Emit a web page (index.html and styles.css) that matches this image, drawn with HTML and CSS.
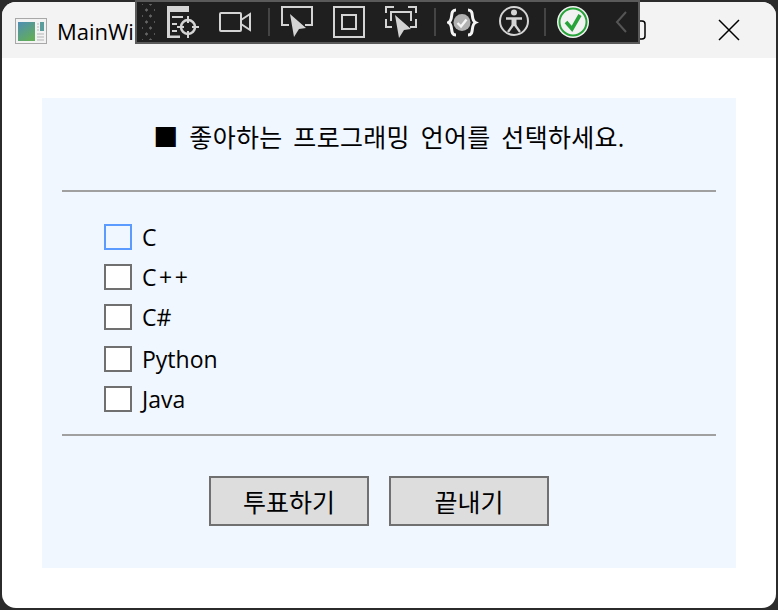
FILE: index.html
```html
<!DOCTYPE html>
<html lang="ko">
<head>
<meta charset="UTF-8" />
<title>MainWindow</title>
<link rel="stylesheet" href="styles.css">
</head>
<body>

<div class="window">
  <div class="titlebar">
    <svg class="app-icon" width="32" height="26" viewBox="0 0 32 26">
      <defs>
        <linearGradient id="pane" x1="0" y1="0" x2="0.6" y2="1">
          <stop offset="0" stop-color="#4f8db5" />
          <stop offset="1" stop-color="#62ad5c" />
        </linearGradient>
      </defs>
      <rect x="0.5" y="0.5" width="31" height="25" fill="#f2f2f2" stroke="#a8a8a8" />
      <rect x="3" y="4" width="17" height="19" fill="url(#pane)" />
      <rect x="25" y="4" width="4" height="9" fill="#5b9c9c" />
      <path d="M22 6h2M22 9h2M22 12h2M22 16h7M22 19h7M22 22h7" stroke="#b5b5b5" />
    </svg>
    <span class="title">MainWindow</span>
    <div class="win-btn">
      <svg width="22" height="22" viewBox="0 0 22 22"><rect x="1" y="2" width="20" height="18" rx="3" fill="none" stroke="#000" stroke-width="1.5" /></svg>
    </div>
    <div class="win-btn">
      <svg width="22" height="22" viewBox="0 0 22 22"><path d="M1 1L21 21M21 1L1 21" stroke="#000" stroke-width="1.5" /></svg>
    </div>
  </div>

  <div class="content">
    <div class="panel">
      <p class="question">■ 좋아하는 프로그래밍 언어를 선택하세요.</p>
      <hr class="rule">
      <div class="options">
        <label class="option"><input type="checkbox" class="check-hover"> C</label>
        <label class="option"><input type="checkbox"> <span class="wide">C++</span></label>
        <label class="option"><input type="checkbox"> C#</label>
        <label class="option option-python"><input type="checkbox"> Python</label>
        <label class="option"><input type="checkbox"> Java</label>
      </div>
      <hr class="rule">
      <div class="buttons">
        <button>투표하기</button>
        <button>끝내기</button>
      </div>
    </div>
  </div>
</div>

<!-- debug toolbar sits on top of the title bar -->
<div class="toolbar">
  <div class="grip"></div>
  <svg class="tb-icon" width="32" height="32" viewBox="0 0 32 32" fill="none" stroke="#d4d4d4" stroke-width="2">
    <path d="M0 0h22v6H0z" fill="#d4d4d4" stroke="none" />
    <path d="M1.500 6v25H13" stroke-width="3" />
    <path d="M5 11h11M5 18h5M5 25h5" />
    <circle cx="21" cy="21" r="7" fill="#1f1f1f" stroke-width="2.500" />
    <path d="M21 10v7M21 25v7M10 21h7M25 21h7" />
  </svg>
  <svg class="tb-icon" width="32" height="32" viewBox="0 0 32 32" fill="none" stroke="#d4d4d4" stroke-width="2">
    <rect x="1" y="7" width="21" height="18" rx="1" />
    <path d="M22 14l9-6v16l-9-6" />
  </svg>
  <div class="tb-sep"></div>
  <svg class="tb-icon" width="32" height="32" viewBox="0 0 32 32" fill="none" stroke="#d4d4d4" stroke-width="2">
    <path d="M8 19H1V1h30v18h-7" />
    <path d="M9 8l16 14-7 1-5 8z" fill="#d4d4d4" stroke="none" />
  </svg>
  <svg class="tb-icon" width="32" height="32" viewBox="0 0 32 32" fill="none" stroke="#d4d4d4" stroke-width="2">
    <rect x="1" y="1" width="30" height="30" />
    <rect x="9" y="9" width="14" height="14" />
  </svg>
  <svg class="tb-icon" width="32" height="32" viewBox="0 0 32 32" fill="none" stroke="#d4d4d4" stroke-width="2">
    <path d="M1 7V1h8M23 1h8v6M1 13v8h6M31 13v8h-6M6 15V6h20v9" />
    <path d="M10 9l16 14-7 1-5 8z" fill="#d4d4d4" stroke="none" />
  </svg>
  <div class="tb-sep"></div>
  <svg class="tb-icon" width="32" height="32" viewBox="0 0 32 32" fill="none">
    <path d="M9 4C2 4 7 14 1.500 16.500 7 19 2 29 9 29M21 4c7 0 2 10 7.500 12.500C23 19 28 29 21 29" stroke="#f4f4f4" stroke-width="3" />
    <circle cx="15" cy="16.500" r="8.500" fill="#b0b0b0" />
    <path d="M10.500 17l3.500 3.500 5.500-7" stroke="#f4f4f4" stroke-width="2.400" />
  </svg>
  <svg class="tb-icon" width="32" height="32" viewBox="0 0 32 32" fill="none" stroke="#d4d4d4">
    <circle cx="15" cy="15" r="14" stroke-width="2" />
    <circle cx="15" cy="6.500" r="3" fill="#d4d4d4" stroke="none" />
    <path d="M7 12.500h16" stroke-width="2.500" />
    <path d="M15 12v8" stroke-width="5" />
    <path d="M14 19l-5 7M16 19l5 7" stroke-width="2.200" />
  </svg>
  <div class="tb-sep tb-sep-close"></div>
  <svg class="tb-icon" width="32" height="32" viewBox="0 0 32 32" fill="none">
    <circle cx="16" cy="16" r="16" fill="#f2f2f2" />
    <circle cx="16" cy="16" r="13.500" stroke="#27a33a" stroke-width="2" />
    <path d="M9 16l6 7 8-14" stroke="#27a33a" stroke-width="3.600" />
  </svg>
  <svg class="tb-chevron" width="12" height="22" viewBox="0 0 12 22" fill="none">
    <path d="M11 1L2 11l9 10" stroke="#555" stroke-width="2" />
  </svg>
</div>

</body>
</html>
```

FILE: styles.css
```css
html, body { height: 100%; }
body {
  margin: 0;
  background: #2b2b2b;
  font-family: "Open Sans", "Noto Sans CJK KR", sans-serif;
  color: #000;
  overflow: hidden;
}
.window {
  position: absolute;
  top: 2px;
  left: 2px;
  width: 774px;
  height: 606px;
  background: #fff;
  border-radius: 14px;
  overflow: hidden;
}
.titlebar {
  display: flex;
  align-items: center;
  height: 56px;
  background: #f3f3f3;
  padding-left: 13px;
}
.app-icon { margin-top: 2px; }
.title {
  flex: 1;
  margin-left: 10px;
  font-size: 22px;
  margin-top: 2px;
}
.win-btn {
  display: flex;
  align-items: center;
  justify-content: center;
  width: 94px;
  height: 56px;
}
.content { padding: 40px; }
.panel {
  height: 470px;
  box-sizing: border-box;
  padding: 0 20px;
  background: #f0f7ff;
}
.question {
  margin: 0;
  height: 92px;
  padding-top: 22px;
  box-sizing: border-box;
  text-align: center;
  font-size: 25px;
  line-height: 34px;
  word-spacing: 4px;
  letter-spacing: 0.3px;
}
.rule {
  margin: 0;
  border: none;
  height: 2px;
  background: #a0a0a0;
}
.options {
  height: 242px;
  box-sizing: border-box;
  padding: 32px 0 0 42px;
}
.option {
  display: flex;
  align-items: center;
  gap: 10px;
  height: 26px;
  margin-bottom: 14px;
  font-size: 23px;
}
.option-python { margin-top: 16px; }
.wide { letter-spacing: 2.500px; }
.option input {
  appearance: none;
  margin: 0;
  width: 28px;
  height: 26px;
  box-sizing: border-box;
  background: #fff;
  border: 2px solid #707070;
}
.option input.check-hover {
  background: #f0f7ff;
  border-color: #5b9bff;
}
.buttons {
  display: flex;
  justify-content: center;
  gap: 20px;
  padding: 40px 20px 0 0;
}
button {
  width: 160px;
  height: 50px;
  background: #dddddd;
  border: 2px solid #707070;
  padding: 0;
  font-family: inherit;
  font-size: 25px;
  color: #000;
}
.toolbar {
  position: absolute;
  top: 0;
  left: 135px;
  width: 505px;
  height: 44px;
  box-sizing: border-box;
  display: flex;
  align-items: center;
  background: #1f1f1f;
  border: 2px solid #5a5a5a;
  padding-left: 5px;
}
.grip {
  width: 13px;
  height: 36px;
  background-image:
    radial-gradient(#666 1px, transparent 1.300px),
    radial-gradient(#666 1px, transparent 1.300px);
  background-size: 9px 12px;
  background-position: 0 0, 4px 6px;
}
.tb-icon { margin-left: 20px; }
.grip + .tb-icon { margin-left: 12px; }
.tb-sep {
  width: 2px;
  height: 28px;
  margin-left: 17px;
  background: #444;
}
.tb-sep-close { margin-left: 13px; }
.tb-sep + .tb-icon { margin-left: 11px; }
.tb-chevron { margin-left: 26px; }
```
